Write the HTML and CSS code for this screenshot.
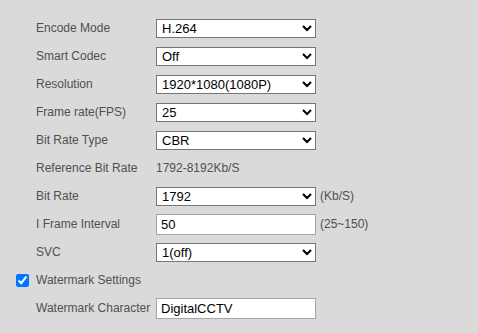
FILE: index.html
```html
<!DOCTYPE html>
<html>
<head>
<meta charset="utf-8">
<link rel="stylesheet" href="styles.css">
</head>
<body>
<form class="form">
  <div class="row"><span class="label">Encode Mode</span><select class="field sel"><option>H.264</option></select></div>
  <div class="row"><span class="label">Smart Codec</span><select class="field sel"><option>Off</option></select></div>
  <div class="row"><span class="label">Resolution</span><select class="field sel"><option>1920*1080(1080P)</option></select></div>
  <div class="row"><span class="label">Frame rate(FPS)</span><select class="field sel"><option>25</option></select></div>
  <div class="row"><span class="label">Bit Rate Type</span><select class="field sel"><option>CBR</option></select></div>
  <div class="row"><span class="label">Reference Bit Rate</span><span class="value">1792-8192Kb/S</span></div>
  <div class="row"><span class="label">Bit Rate</span><select class="field sel"><option>1792</option></select><span class="unit">(Kb/S)</span></div>
  <div class="row"><span class="label">I Frame Interval</span><input class="field txt" type="text" value="50"><span class="unit">(25~150)</span></div>
  <div class="row"><span class="label">SVC</span><select class="field sel"><option>1(off)</option></select></div>
  <div class="row check-row"><input class="check" type="checkbox" checked><span class="label">Watermark Settings</span></div>
  <div class="row"><span class="label">Watermark Character</span><input class="field txt" type="text" value="DigitalCCTV"></div>
</form>
</body>
</html>
```

FILE: styles.css
```css
html, body {
  margin: 0;
  padding: 0;
  background: #dadada;
}
body {
  font-family: "Liberation Sans", Arial, sans-serif;
  width: 478px;
  height: 333px;
  overflow: hidden;
}
.form {
  padding: 14px 0 0 36px;
  display: flex;
  flex-direction: column;
}
.row {
  height: 28px;
  display: flex;
  align-items: center;
}
.label {
  width: 120px;
  flex: none;
  font-size: 12px;
  color: #505050;
}
.value {
  font-size: 12px;
  color: #505050;
}
.unit {
  font-size: 12px;
  color: #505050;
  margin-left: 4px;
}
.field {
  box-sizing: border-box;
  width: 160px;
  margin: 0;
  font-family: "Liberation Sans", Arial, sans-serif;
  font-size: 13px;
  color: #000;
  background: #fff;
}
.sel {
  height: 19px;
  padding: 0 0 0 1px;
}
.txt {
  height: 21px;
  border: 1px solid #a6a6a6;
  padding: 0 4px;
  outline: none;
}
.check-row {
  margin-left: -20px;
}
.check {
  width: 13px;
  height: 13px;
  margin: 0 7px 0 0;
  accent-color: #0075ff;
}
```
